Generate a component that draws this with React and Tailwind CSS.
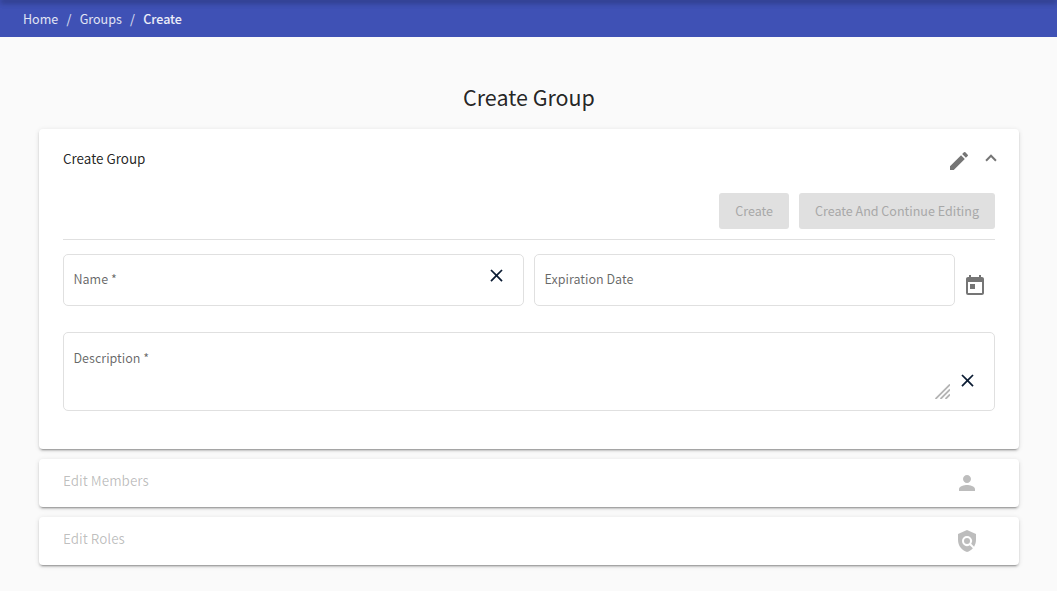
import { MdEdit, MdToday, MdPerson, MdPolicy, MdClose } from "react-icons/md";

const card =
  "rounded bg-white shadow-[0_3px_1px_-2px_rgba(0,0,0,0.2),0_2px_2px_0_rgba(0,0,0,0.14),0_1px_5px_0_rgba(0,0,0,0.12)]";
const field = "flex rounded-[5px] border border-[#e0e0e0]";

function Breadcrumbs() {
  return (
    <nav className="relative flex h-[37px] items-center overflow-hidden bg-[#3f51b5] pl-[23px] text-[12.53px] leading-5 text-white/85">
      <div className="absolute inset-x-0 -top-1 h-1 shadow-[0_2px_4px_-1px_rgba(0,0,0,0.2),0_4px_5px_0_rgba(0,0,0,0.14),0_1px_10px_0_rgba(0,0,0,0.12)]" />
      <span>Home</span>
      <span className="px-[8.25px]">/</span>
      <span>Groups</span>
      <span className="px-[8.25px]">/</span>
      <span className="font-medium text-white/90">Create</span>
    </nav>
  );
}

function DisabledButton({ children }) {
  return (
    <button disabled className="h-9 rounded-[3px] bg-[#e0e0e0] px-4 text-[12.53px] leading-9 text-[#a8a8a8]">
      {children}
    </button>
  );
}

function CollapsedPanel({ title, icon: Icon }) {
  return (
    <section className={`${card} flex h-12 justify-between pr-10 pl-6 text-black/26`}>
      <h2 className="pt-[11px] text-[13.43px] leading-5">{title}</h2>
      <Icon className="mt-3 size-6" />
    </section>
  );
}

export default function App() {
  return (
    <div className="h-[591px] bg-[#fafafa] font-['Noto_Sans_CJK_SC',sans-serif] text-black/87">
      <Breadcrumbs />
      <main className="flex flex-col gap-2.5 pr-[38px] pl-[39px]">
        <h1 className="-mb-2.5 h-[92px] pt-11 text-center text-[21.48px] leading-8">Create Group</h1>
        <section className={`${card} h-80 px-6`}>
          <header className="flex h-16 justify-between">
            <h2 className="pt-[19px] text-[13.43px] leading-5">Create Group</h2>
            <div className="flex gap-4">
              <MdEdit className="mt-5 size-6 text-black/54" />
              <span className="mt-[27px] size-2 rotate-[225deg] border-r-2 border-b-2 border-black/54" />
            </div>
          </header>
          <div className="flex h-[47px] justify-end gap-2.5 border-b border-[#e0e0e0]">
            <DisabledButton>Create</DisabledButton>
            <DisabledButton>Create And Continue Editing</DisabledButton>
          </div>
          <div className="mt-3.5 flex h-[52px] gap-2.5 text-[12.53px] leading-5 text-black/60">
            <div className={`${field} w-[461px] justify-between pr-[16.5px] pl-[9.5px]`}>
              <label className="pt-3.5">Name *</label>
              <MdClose className="mt-2.5 size-[21px] text-[#0b1c33]" />
            </div>
            <div className={`${field} w-[421px] pl-[9.5px]`}>
              <label className="pt-3.5">Expiration Date</label>
            </div>
            <MdToday className="mt-5 -ml-0.5 size-6 text-black/54" />
          </div>
          <div className={`${field} mt-[26px] h-[79px] justify-between pr-[16.5px] pl-[9.5px] text-[12.53px] leading-5 text-black/60`}>
            <label className="pt-[15px]">Description *</label>
            <div className="flex">
              <svg className="mt-[51px] mr-[6.5px] size-[15px]" viewBox="0 0 15 15" fill="none" stroke="#b4b4b4" strokeWidth="1.8">
                <path d="M.5 15 15 .5M5.5 15 15 5.5M10.5 15l4.5-4.5" />
              </svg>
              <MdClose className="mt-[37px] size-[21px] text-[#0b1c33]" />
            </div>
          </div>
        </section>
        <CollapsedPanel title="Edit Members" icon={MdPerson} />
        <CollapsedPanel title="Edit Roles" icon={MdPolicy} />
      </main>
    </div>
  );
}
